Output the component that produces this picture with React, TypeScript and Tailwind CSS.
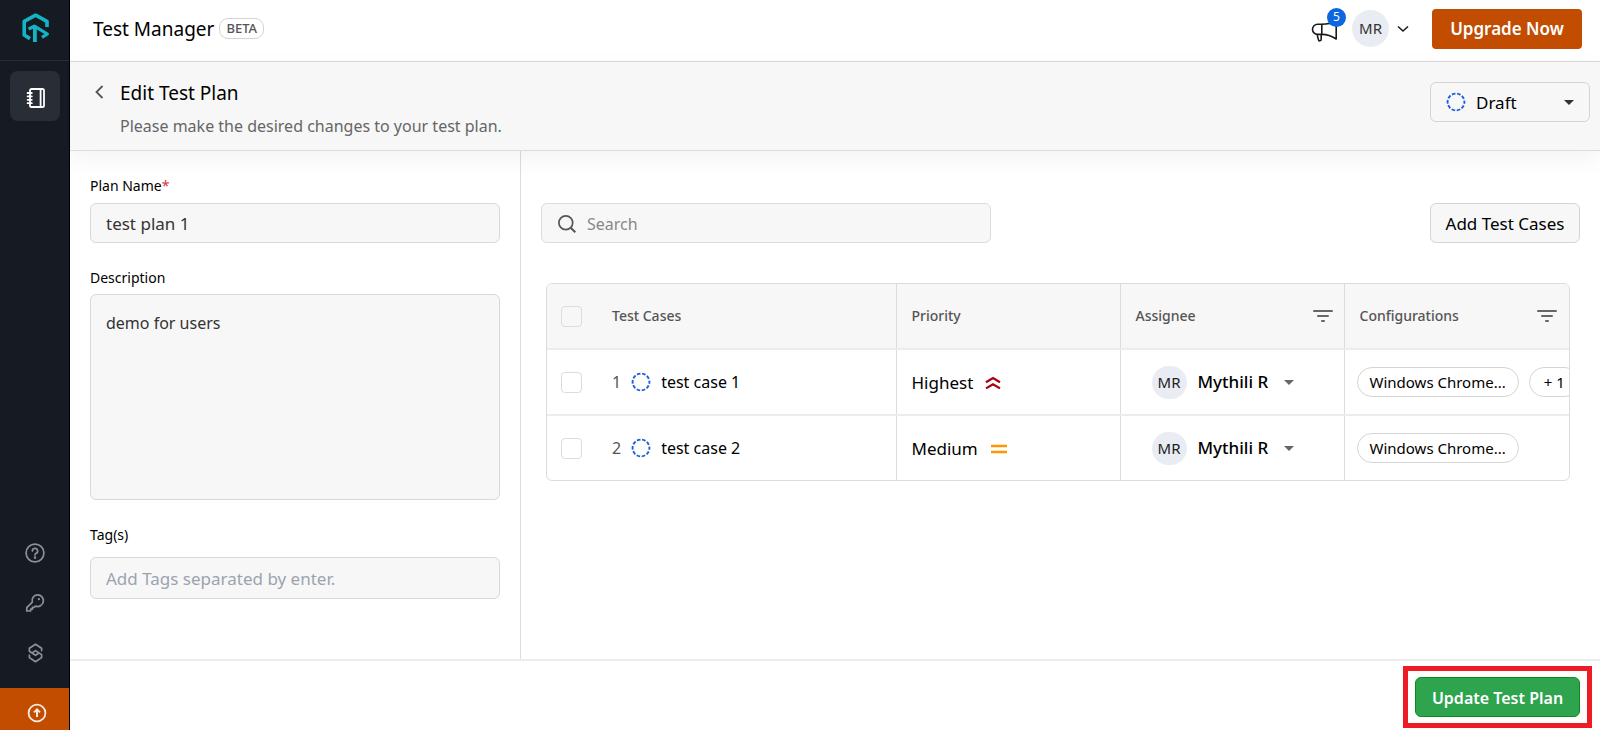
import React from 'react';

interface TestCase {
  id: number;
  title: string;
  priority: 'Highest' | 'Medium';
  assignee: string;
  initials: string;
  configuration: string;
  extra?: number;
}

const testCases: TestCase[] = [
  {
    id: 1,
    title: 'test case 1',
    priority: 'Highest',
    assignee: 'Mythili R',
    initials: 'MR',
    configuration: 'Windows Chrome...',
    extra: 1,
  },
  {
    id: 2,
    title: 'test case 2',
    priority: 'Medium',
    assignee: 'Mythili R',
    initials: 'MR',
    configuration: 'Windows Chrome...',
  },
];

const LogoIcon = () => (
  <svg width="28" height="30" viewBox="0 0 28 30" fill="none" stroke="#12b5c6" strokeWidth="3.6" strokeLinejoin="round">
    <path d="M8 25.6 2.2 22V8.4L13.6 2.2 25 8.4V14" />
    <path d="M12.9 29V14.5" strokeWidth="3.8" />
    <path d="M6.6 16 12.4 13.2 25.4 21 20 24.4" strokeWidth="3.2" />
  </svg>
);

const NotebookIcon = () => (
  <svg width="20" height="20" viewBox="0 0 20 20" fill="none" stroke="#fff" strokeWidth="1.8" strokeLinecap="round">
    <rect x="4" y="1" width="14" height="18" rx="1.6" />
    <path d="M14.6 1v18M1.6 5h4.2M1.6 8.4h4.2M1.6 11.8h4.2M1.6 15.2h4.2" />
  </svg>
);

const HelpIcon = () => (
  <svg width="20" height="20" viewBox="0 0 20 20" fill="none" stroke="#8b919b" strokeWidth="1.7" strokeLinecap="round">
    <circle cx="10" cy="10" r="8.9" />
    <path d="M7.4 8a2.6 2.6 0 1 1 3.8 2.3c-.8.4-1.2.8-1.2 1.7" />
    <circle cx="10" cy="14.6" r=".5" fill="#8b919b" />
  </svg>
);

const KeyIcon = () => (
  <svg width="20" height="20" viewBox="0 0 20 20" fill="none" stroke="#8b919b" strokeWidth="1.7" strokeLinejoin="round">
    <path d="M12.4 1.9a5.8 5.8 0 1 1-1.9 11.2L9 14.4H7.4v1.8H5.6V18H1.8v-3.4l5.5-5.4A5.8 5.8 0 0 1 12.4 1.9z" />
    <circle cx="13.9" cy="6.2" r="1.1" fill="#8b919b" stroke="none" />
  </svg>
);

const LayersIcon = () => (
  <svg width="15" height="20" viewBox="0 0 15 20" fill="none" stroke="#8b919b" strokeWidth="1.7" strokeLinecap="round" strokeLinejoin="round">
    <path d="M13.6 7.6V5.3L7.5 1.2 1.4 5.3v3l6.1 4 2.7-1.8" />
    <path d="M1.4 12.2v2.4l6.1 4.1 6.1-4.1v-3l-6.1-4-2.7 1.8" />
  </svg>
);

const UpgradeIcon = () => (
  <svg width="20" height="20" viewBox="0 0 20 20" fill="none" stroke="#f7e9e0" strokeWidth="1.8">
    <circle cx="10" cy="10" r="8.4" />
    <path d="M10 14V7M7 9.4l3-3 3 3" strokeWidth="2" />
  </svg>
);

const MegaphoneIcon = () => (
  <svg width="28" height="22" viewBox="0 0 28 22" fill="none" stroke="#1a1a1a" strokeWidth="1.6" strokeLinejoin="round">
    <path d="M10.8 4.2H6.6a5 5 0 0 0 0 10.2h4.2z" />
    <path d="M10.8 4.2C17 4.2 21 3.2 25.2 1v18c-4.2-2.8-8.2-4.6-14.4-4.6" />
    <path d="M6.4 14.4v1.2l1 4a1.4 1.4 0 0 0 2.8-.4v-4.8" />
  </svg>
);

const ChevronIcon = () => (
  <svg width="12" height="8" viewBox="0 0 12 8" fill="none" stroke="#1a1a1a" strokeWidth="1.6">
    <path d="m1 1.5 5 4.5 5-4.5" />
  </svg>
);

const BackIcon = () => (
  <svg width="9" height="14" viewBox="0 0 9 14" fill="none" stroke="#555" strokeWidth="1.8">
    <path d="m7.5 1-6 6 6 6" />
  </svg>
);

const DraftIcon = () => (
  <svg width="20" height="20" viewBox="0 0 20 20" fill="none" stroke="#1d5fdc" strokeWidth="1.9">
    <circle cx="10" cy="10" r="8.4" strokeDasharray="3.6 1.678" strokeDashoffset="1.8" />
  </svg>
);

const CaretIcon = ({ className = '' }: { className?: string }) => (
  <svg className={className} width="10" height="5" viewBox="0 0 10 5" fill="currentColor">
    <path d="M0 0h10L5 5z" />
  </svg>
);

const SearchIcon = () => (
  <svg width="18" height="18" viewBox="0 0 18 18" fill="none" stroke="#555" strokeWidth="1.7">
    <circle cx="7.8" cy="7.8" r="6.9" />
    <path d="m12.7 12.7 4.6 4.6" strokeWidth="2" />
  </svg>
);

const FilterIcon = () => (
  <svg width="20" height="14" viewBox="0 0 20 14" fill="none" stroke="#666" strokeWidth="2" strokeLinecap="round">
    <path d="M1 2h18M5 7h10M9 12h2" />
  </svg>
);

const PriorityIcon = ({ priority }: { priority: TestCase['priority'] }) => {
  if (priority === 'Highest') {
    return (
      <svg width="16" height="14" viewBox="0 0 16 14" fill="none" stroke="#a8000e" strokeWidth="2.2">
        <path d="M1 6.2 8 2l7 4.2M1 12.4l7-4.2 7 4.2" />
      </svg>
    );
  }
  return (
    <svg width="18" height="12" viewBox="0 0 18 12" fill="none" stroke="#ff9800" strokeWidth="2.6">
      <path d="M1 3h16M1 9h16" />
    </svg>
  );
};

const checkboxClass = 'block w-[21px] h-[21px] appearance-none rounded border border-[#dcdcdc] checked:bg-blue-600';

const Sidebar = () => (
  <nav className="relative z-10 flex w-[70px] shrink-0 flex-col items-center border-r border-black bg-[#161a23]">
    <a href="#home" aria-label="Home" className="flex h-[61px] w-full items-center justify-center border-b border-[#262b34] pb-1 pl-[2px]">
      <LogoIcon />
    </a>
    <a href="#plans" aria-label="Test plans" className="mt-[10px] flex h-[50px] w-[50px] items-center justify-center rounded-lg bg-[#292e36] pl-[2px] pt-1">
      <NotebookIcon />
    </a>
    <div className="mt-auto flex flex-col items-center gap-[30px] pb-[25px]">
      <a href="#help" aria-label="Help"><HelpIcon /></a>
      <a href="#keys" aria-label="Access keys"><KeyIcon /></a>
      <a href="#integrations" aria-label="Integrations" className="pl-[2px]"><LayersIcon /></a>
    </div>
    <a href="#upgrade" aria-label="Upgrade" className="flex h-[42px] w-full items-center justify-center bg-[#c24d00] pl-[5px] pt-2">
      <UpgradeIcon />
    </a>
  </nav>
);

const TopBar = () => (
  <header className="flex h-[62px] shrink-0 items-center border-b border-[#d9d9d9] pb-1 pl-[23px] pr-[18px]">
    <h1 className="pt-[2px] text-[19px] text-black">Test Manager</h1>
    <span className="ml-[5px] rounded-[9px] border border-[#d4d4d4] px-[6px] text-[13px] font-medium leading-[19px] text-[#555]">
      BETA
    </span>
    <div className="ml-auto flex items-center">
      <button aria-label="Announcements" className="relative mt-1">
        <MegaphoneIcon />
        <span className="absolute -top-3 left-4 flex h-[19px] w-[19px] items-center justify-center rounded-full bg-[#0b66e0] text-xs text-white">
          5
        </span>
      </button>
      <button aria-label="Account" className="ml-[13px] flex items-center gap-2">
        <span className="flex h-[37px] w-[37px] items-center justify-center rounded-full bg-[#e9ecf3] text-[15px] text-[#333]">MR</span>
        <ChevronIcon />
      </button>
      <button className="ml-[23px] h-10 w-[150px] rounded bg-[#c24d00] text-[17px] font-semibold text-white">
        Upgrade Now
      </button>
    </div>
  </header>
);

const PlanHeader = () => (
  <div className="relative flex h-[89px] shrink-0 items-start border-b border-[#dcdcdc] bg-[#f7f7f7] pl-[25px] pr-[10px] shadow-[0_8px_24px_rgba(0,0,0,0.05)]">
    <button aria-label="Back" className="mt-[23px]">
      <BackIcon />
    </button>
    <div className="ml-4 mt-[17px]">
      <h2 className="text-[19px] leading-7 text-black">Edit Test Plan</h2>
      <p className="mt-[7px] text-base leading-6 text-[#666]">Please make the desired changes to your test plan.</p>
    </div>
    <div className="relative ml-auto mt-5 text-black">
      <span className="pointer-events-none absolute left-4 top-[10px]"><DraftIcon /></span>
      <select aria-label="Status" className="h-10 w-40 appearance-none rounded-md border border-[#d4d4d4] bg-transparent pl-[45px] pt-[2px] text-[17px]">
        <option>Draft</option>
      </select>
      <CaretIcon className="pointer-events-none absolute right-4 top-[18px] text-[#333]" />
    </div>
  </div>
);

const PlanForm = () => (
  <form className="flex w-[451px] shrink-0 flex-col border-r border-[#dcdcdc] px-5 pt-[25px] text-[#333]">
    <label htmlFor="plan-name" className="text-sm leading-5 text-black">
      Plan Name<span className="text-[#d9363e]">*</span>
    </label>
    <input
      id="plan-name"
      defaultValue="test plan 1"
      className="mt-[7px] h-10 rounded-md border border-[#d9d9d9] bg-[#f7f7f7] px-[15px] text-[17px]"
    />
    <label htmlFor="description" className="mt-[25px] text-sm leading-5 text-black">Description</label>
    <textarea
      id="description"
      defaultValue="demo for users"
      className="mt-[6px] h-[206px] resize-none rounded-md border border-[#d9d9d9] bg-[#f7f7f7] px-[15px] py-4 text-base leading-6"
    />
    <label htmlFor="tags" className="mt-[25px] text-sm leading-5 text-black">Tag(s)</label>
    <input
      id="tags"
      placeholder="Add Tags separated by enter."
      className="mt-3 h-[42px] rounded-md border border-[#d9d9d9] bg-[#f7f7f7] px-[15px] text-[17px] placeholder:text-[#9ca3af]"
    />
  </form>
);

const CasesTable = () => (
  <div className="ml-[5px] mr-[10px] mt-10 overflow-hidden rounded-md border border-[#dcdcdc]">
    <table className="w-full table-fixed text-left">
      <colgroup>
        <col className="w-[51px]" />
        <col />
        <col className="w-56" />
        <col className="w-56" />
        <col className="w-[225px]" />
      </colgroup>
      <thead>
        <tr className="h-[65px] border-b-2 border-[#ececec] bg-[#f7f7f7] text-sm text-[#555]">
          <th className="pl-[14px]">
            <input type="checkbox" aria-label="Select all test cases" className={checkboxClass} />
          </th>
          <th className="border-r border-[#dcdcdc] pl-[14px] font-medium">Test Cases</th>
          <th className="border-r border-[#dcdcdc] pl-[15px] font-medium">Priority</th>
          <th className="border-r border-[#dcdcdc] pl-[15px] pr-[11px] font-medium">
            <span className="flex items-center justify-between">
              Assignee
              <button aria-label="Filter by assignee"><FilterIcon /></button>
            </span>
          </th>
          <th className="pl-[15px] pr-3 font-medium">
            <span className="flex items-center justify-between">
              Configurations
              <button aria-label="Filter by configuration"><FilterIcon /></button>
            </span>
          </th>
        </tr>
      </thead>
      <tbody className="text-[17px] text-black">
        {testCases.map((testCase) => (
          <tr key={testCase.id} className="h-[66px] border-b-2 border-[#ececec] last:h-[65px] last:border-b-0">
            <td className="pl-[14px]">
              <input type="checkbox" aria-label={`Select ${testCase.title}`} className={checkboxClass} />
            </td>
            <td className="border-r border-[#dcdcdc] pl-[14px]">
              <span className="flex items-center text-base">
                <span className="text-[#555]">{testCase.id}</span>
                <span className="mx-[10px]"><DraftIcon /></span>
                {testCase.title}
              </span>
            </td>
            <td className="border-r border-[#dcdcdc] pl-[15px] pt-[2px]">
              <span className="flex items-center gap-3">
                {testCase.priority}
                <PriorityIcon priority={testCase.priority} />
              </span>
            </td>
            <td className="border-r border-[#dcdcdc] pl-[31px]">
              <div className="flex items-center gap-[11px]">
                <span className="flex h-[33px] w-[35px] items-center justify-center rounded-full bg-[#e9ecf3] text-[15px] text-[#222]">
                  {testCase.initials}
                </span>
                <div className="relative">
                  <select aria-label={`Assignee of ${testCase.title}`} className="w-24 appearance-none bg-transparent font-medium">
                    <option>{testCase.assignee}</option>
                  </select>
                  <CaretIcon className="pointer-events-none absolute right-0 top-[11px] text-[#666]" />
                </div>
              </div>
            </td>
            <td className="overflow-hidden pl-3 text-[15px]">
              <span className="flex gap-[10px] whitespace-nowrap">
                <span className="rounded-full border border-[#d4d4d4] px-3 leading-7">{testCase.configuration}</span>
                {testCase.extra && (
                  <span className="rounded-full border border-[#d4d4d4] px-[14px] leading-7">+ {testCase.extra}</span>
                )}
              </span>
            </td>
          </tr>
        ))}
      </tbody>
    </table>
  </div>
);

export default function App() {
  return (
    <div className="flex min-h-screen bg-white font-['Noto_Sans','Open_Sans',sans-serif]">
      <Sidebar />
      <div className="flex min-w-0 flex-1 flex-col">
        <TopBar />
        <PlanHeader />
        <main className="flex flex-1 border-b-2 border-[#ececec]">
          <PlanForm />
          <section className="min-w-0 flex-1 px-5 pt-[52px]">
            <div className="flex items-center justify-between">
              <label className="flex h-10 w-[450px] items-center gap-[11px] rounded-md border border-[#dcdcdc] bg-[#f7f7f7] pl-4 pt-[2px]">
                <SearchIcon />
                <input
                  type="search"
                  aria-label="Search"
                  placeholder="Search"
                  className="flex-1 bg-transparent text-base placeholder:text-[#888]"
                />
              </label>
              <button className="h-10 w-[150px] rounded-md border border-[#d4d4d4] bg-[#f7f7f7] pt-[2px] text-[17px] text-black">
                Add Test Cases
              </button>
            </div>
            <CasesTable />
          </section>
        </main>
        <footer className="flex h-[69px] shrink-0 items-start justify-end pr-2 pt-[5px]">
          <div className="border-[5px] border-[#ed1c24] px-[7px] py-[6px]">
            <button className="block h-10 w-[165px] rounded-md border border-[#0e8a16] bg-[#2ea44f] pt-[2px] text-base font-semibold text-white">
              Update Test Plan
            </button>
          </div>
        </footer>
      </div>
    </div>
  );
}
